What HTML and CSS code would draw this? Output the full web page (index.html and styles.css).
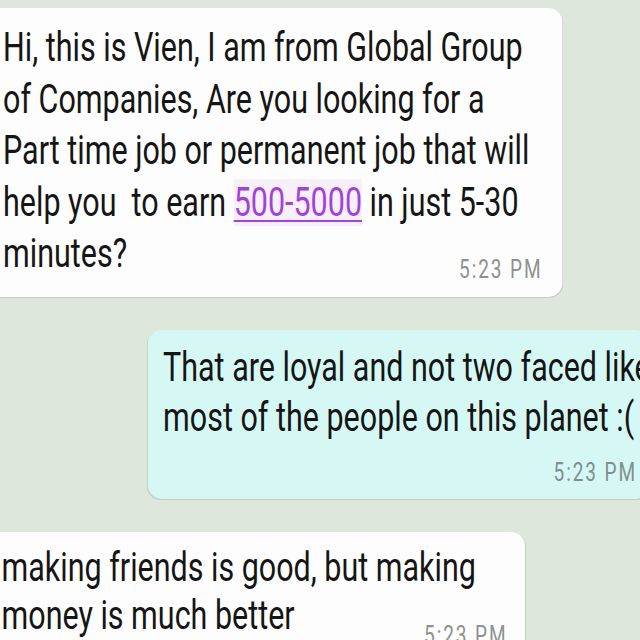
FILE: index.html
```html
<!DOCTYPE html>
<html>
<head>
<meta charset="utf-8">
<link rel="stylesheet" href="styles.css">
</head>
<body>
<div class="chat">
  <div class="bubble in first">
    <p class="msg">Hi, this is Vien, I am from Global Group<br>of Companies, Are you looking for a<br>Part time job or permanent job that will<br>help you&nbsp; to earn <a class="link">500-5000</a> in just 5-30<br>minutes?</p>
    <div class="time">5:23 PM</div>
  </div>
  <div class="bubble out">
    <p class="msg">That are loyal and not two faced like<br>most of the people on this planet :(</p>
    <div class="time">5:23 PM</div>
  </div>
  <div class="bubble in last">
    <p class="msg">making friends is good, but making<br>money is much better</p>
    <div class="time">5:23 PM</div>
  </div>
</div>
</body>
</html>
```
FILE: styles.css
```css
html, body { margin: 0; padding: 0; }
body { background: #dee7dc; width: 640px; height: 640px; overflow: hidden; font-family: Roboto, "Liberation Sans", sans-serif; }
.chat { width: 840px; display: flex; flex-direction: column; gap: 33px; padding-top: 8px; transform: scaleX(0.762); transform-origin: 0 0; }
.bubble { border-radius: 19px / 14px; box-shadow: 0 1px 1px rgba(0, 0, 0, 0.12); box-sizing: border-box; }
.in { background: #fdfdfd; align-self: flex-start; }
.out { background: #d6f8f5; align-self: flex-end; margin-right: -12px; }
.msg { margin: 0; font-size: 40px; line-height: 50px; color: #151515; white-space: nowrap; }
.link { color: #a343d6; text-decoration: underline; text-decoration-thickness: 2px; text-underline-offset: 4px; background: #f7f0fb; }
.time { font-size: 25px; line-height: 28px; letter-spacing: 2.5px; color: #8d918f; text-align: right; }
.first { margin-left: -24px; width: 762px; padding: 14px 26px 13px 28px; }
.first .msg { line-height: 51.5px; }
.first .time { margin-top: -24px; }
.out { width: 658px; padding: 13px 16px 12px 20px; }
.out .time { margin-top: 16px; color: #7f8f8d; }
.last { margin-left: -20px; width: 709px; padding: 12px 23px 20px 22px; }
.last .msg { line-height: 48px; }
.last .time { margin-top: -18px; }
```
